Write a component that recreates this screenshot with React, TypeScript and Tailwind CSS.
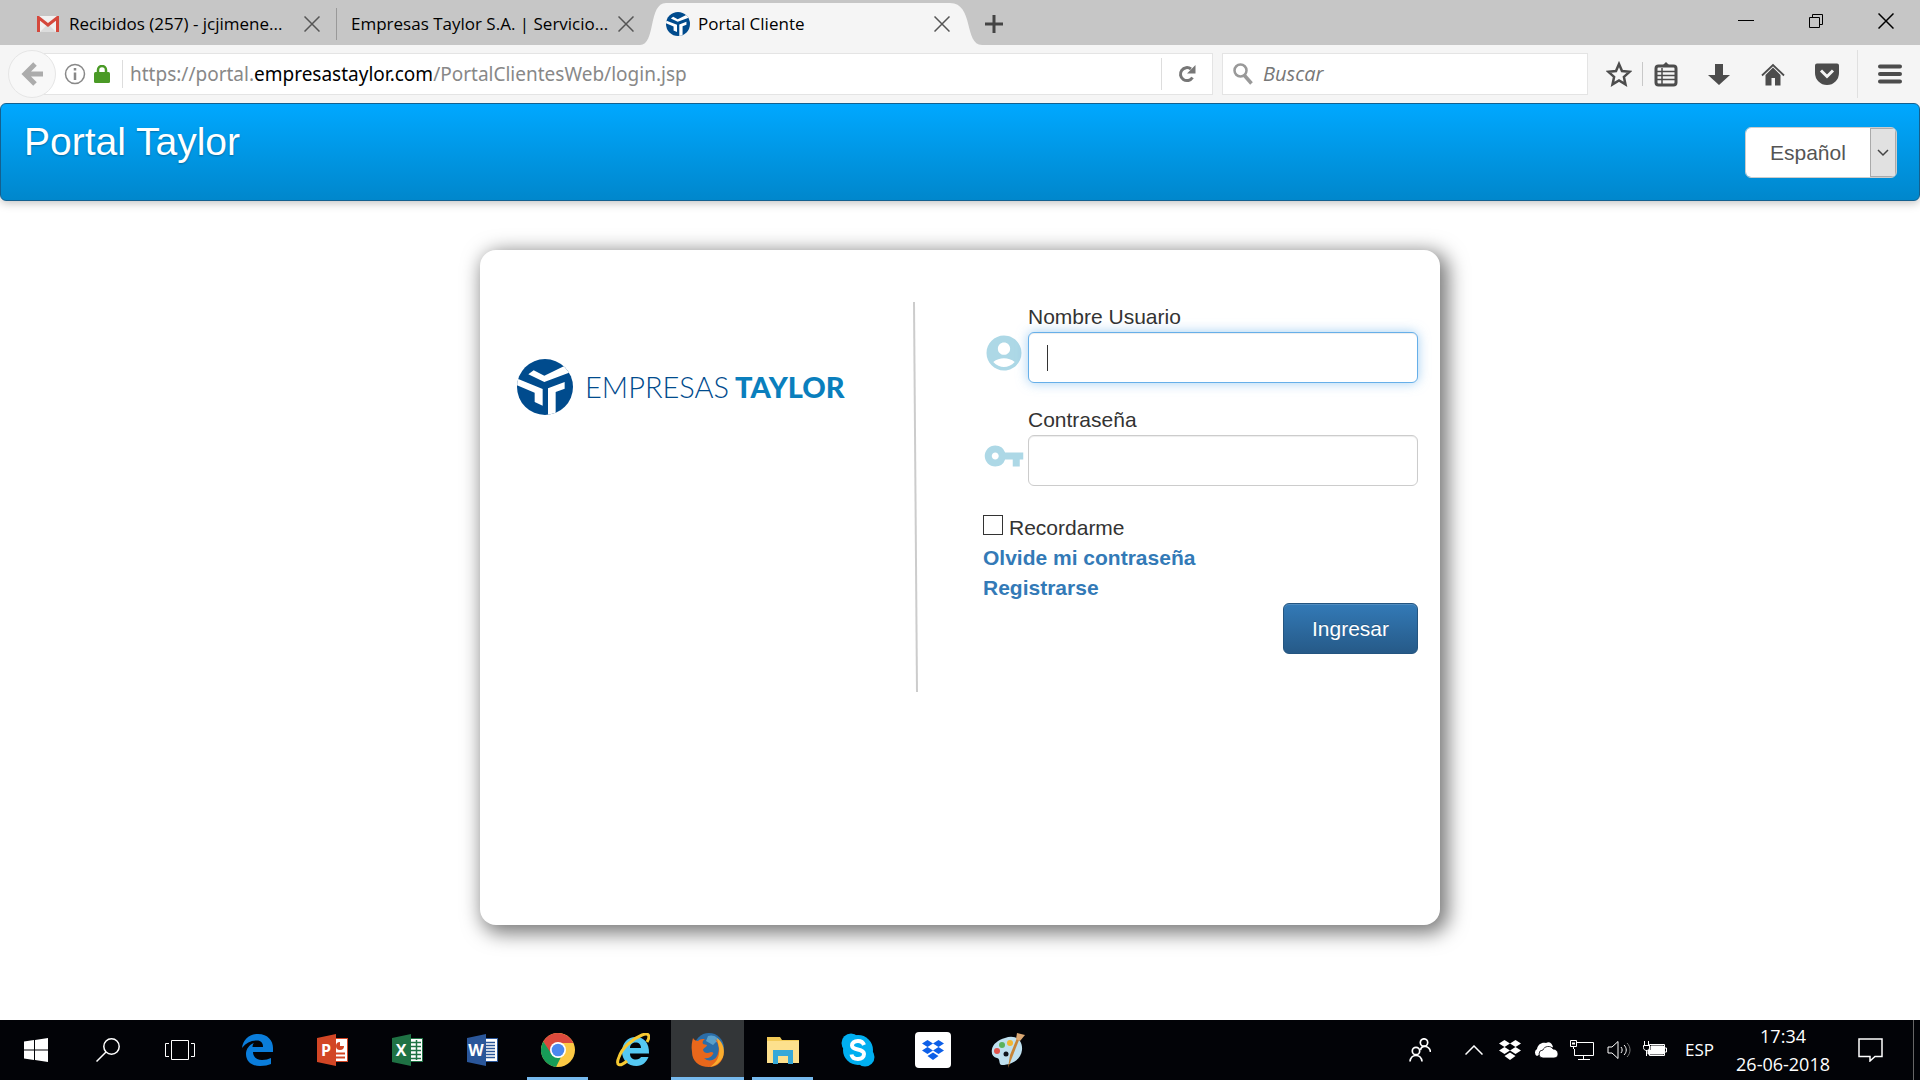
import type { ReactNode } from "react";
import { MdAccountCircle, MdVpnKey } from "react-icons/md";

type IconProps = {
  className?: string;
};

type TaskbarApp = {
  name: string;
  icon: ReactNode;
  state: "closed" | "open" | "active";
};

const TaylorMark = ({ className }: IconProps) => (
  <svg className={className} viewBox="0 0 168 168" aria-hidden="true">
    <defs>
      <clipPath id="taylor-disc">
        <circle cx="84" cy="84" r="84" />
      </clipPath>
    </defs>
    <g clipPath="url(#taylor-disc)">
      <rect width="168" height="168" fill="#004b8d" />
      <path
        fill="#fff"
        d="M148 18 82 50 50 34 34 46l48 23 86-32zM-2 58l79 32v50l-24-11v-28L-2 78zM93 88l50-19v20l-27 10v69H93z"
      />
    </g>
  </svg>
);

const CloseIcon = ({ className }: IconProps) => (
  <svg className={className} viewBox="0 0 16 16" stroke="currentColor" strokeWidth="1.5" aria-hidden="true">
    <path d="m.5.5 15 15M15.5.5l-15 15" />
  </svg>
);

const GmailIcon = () => (
  <svg className="h-4 w-[22px] shrink-0" viewBox="0 0 22 16" aria-hidden="true">
    <rect width="22" height="16" rx="1" fill="#f1f1f1" />
    <path d="m3 16 8-8 8 8z" fill="#dcdcdc" />
    <path d="M1.500 16V1.500L11 9l9.500-7.500V16" fill="none" stroke="#d5483c" strokeWidth="3" />
  </svg>
);

const TabStrip = () => (
  <header className="flex h-[45px] items-end bg-[#c6c6c6] text-[17px] leading-6 text-black">
    <div className="flex h-[42px] w-80 items-center pl-[37px]">
      <GmailIcon />
      <span className="ml-2.5 flex-1 whitespace-nowrap">Recibidos (257) - jcjimene...</span>
      <button type="button" aria-label="Cerrar pestaña Recibidos" className="shrink-0 text-[#555]">
        <CloseIcon className="size-4" />
      </button>
    </div>
    <div className="ml-4 flex h-[42px] w-[298px] items-center">
      <span className="h-8 w-px bg-[#999]" />
      <span className="ml-3.5 flex-1 whitespace-nowrap">Empresas Taylor S.A. | Servicio...</span>
      <button type="button" aria-label="Cerrar pestaña Empresas Taylor" className="shrink-0 text-[#555]">
        <CloseIcon className="size-4" />
      </button>
    </div>
    <div className="ml-1.5 flex h-[42px]">
      <svg className="h-full w-[26px]" viewBox="0 0 26 42" fill="#f5f5f5" aria-hidden="true">
        <path d="M0 42C16 42 8 0 26 0v42z" />
      </svg>
      <div className="flex w-[284px] items-center bg-[#f5f5f5]">
        <TaylorMark className="size-6" />
        <span className="ml-2 flex-1">Portal Cliente</span>
        <button type="button" aria-label="Cerrar pestaña Portal Cliente" className="text-[#555]">
          <CloseIcon className="size-4" />
        </button>
      </div>
      <svg className="h-full w-[32px]" viewBox="0 0 32 42" fill="#f5f5f5" aria-hidden="true">
        <path d="M0 0c24 0 14 42 32 42H0z" />
      </svg>
    </div>
    <button type="button" aria-label="Nueva pestaña" className="ml-0.5 flex h-[42px] items-center text-[#444]">
      <svg className="size-5" viewBox="0 0 20 20" stroke="currentColor" strokeWidth="3" aria-hidden="true">
        <path d="M10 1v18M1 10h18" />
      </svg>
    </button>
    <div className="ml-auto flex h-full items-start pr-6">
      <button type="button" aria-label="Minimizar" className="flex h-[42px] w-[70px] items-center justify-end">
        <svg className="size-5" viewBox="0 0 20 20" stroke="#000" aria-hidden="true">
          <path d="M2 9.500h16" />
        </svg>
      </button>
      <button type="button" aria-label="Restaurar" className="flex h-[42px] w-[70px] items-center justify-end">
        <svg className="size-5" viewBox="0 0 20 20" fill="none" stroke="#000" aria-hidden="true">
          <path d="M3.500 6.500h10v10h-10zM6.500 6.500v-3h10v10h-3" />
        </svg>
      </button>
      <button type="button" aria-label="Cerrar" className="flex h-[42px] w-[70px] items-center justify-end">
        <CloseIcon className="mr-0.5 size-4" />
      </button>
    </div>
  </header>
);

const NavigationBar = () => (
  <nav className="flex h-[58px] items-center bg-[#f5f5f5] px-2 text-xl text-[#4c4c4c]">
    <button
      type="button"
      aria-label="Atrás"
      className="z-10 flex size-12 shrink-0 items-center justify-center rounded-full border border-[#e6e6e6] bg-[#f8f8f8] text-[#acacac]"
    >
      <svg className="h-6 w-[22px]" viewBox="0 0 22 24" fill="none" stroke="currentColor" strokeWidth="5" aria-hidden="true">
        <path d="M22 12H5M14 2 4 12l10 10" />
      </svg>
    </button>
    <div className="-ml-3 flex h-[42px] flex-1 items-center border border-[#e4e4e4] bg-white pl-[19px]">
      <svg className="size-[22px] shrink-0" viewBox="0 0 22 22" fill="none" stroke="#888" aria-hidden="true">
        <circle cx="11" cy="11" r="9.500" strokeWidth="1.500" />
        <path d="M11 9.500V17M11 5v2.500" strokeWidth="2.500" />
      </svg>
      <svg className="ml-2 h-[18px] w-4 shrink-0" viewBox="0 0 16 18" aria-hidden="true">
        <path d="M4 9V5a4 4 0 0 1 8 0v4" fill="none" stroke="#4a9a26" strokeWidth="2.500" />
        <rect y="7" width="16" height="11" rx="1.500" fill="#4a9a26" />
      </svg>
      <span className="ml-3 h-7 w-px bg-[#ddd]" />
      <span className="ml-[7px] flex-1 font-['Noto_Sans'] text-[19px] whitespace-nowrap text-[#888]">
        https://portal.<span className="text-black">empresastaylor.com</span>/PortalClientesWeb/login.jsp
      </span>
      <button
        type="button"
        aria-label="Recargar"
        className="flex h-8 w-[51px] items-center justify-center border-l border-[#ddd] text-[#777]"
      >
        <svg className="size-[18px]" viewBox="0 0 18 18" aria-hidden="true">
          <path d="M14.500 12.500A6.500 6.500 0 1 1 13 4" fill="none" stroke="currentColor" strokeWidth="3" />
          <path d="M17.500 0v8.500H9z" fill="currentColor" />
        </svg>
      </button>
    </div>
    <label className="ml-[9px] flex h-[42px] w-[366px] items-center border border-[#e4e4e4] bg-white pl-2.5">
      <svg className="h-6 w-5" viewBox="0 0 20 24" fill="none" stroke="#999" aria-hidden="true">
        <circle cx="7.500" cy="8.500" r="6" strokeWidth="2.500" />
        <path d="m11.500 13.500 7 8" strokeWidth="3.500" />
      </svg>
      <input
        type="search"
        aria-label="Buscar en la web"
        placeholder="Buscar"
        className="ml-2.5 min-w-0 flex-1 bg-transparent italic outline-none placeholder:text-[#777]"
      />
    </label>
    <div className="flex h-full items-center pl-[18px]">
      <button type="button" aria-label="Añadir a marcadores">
        <svg className="size-[26px]" viewBox="0 0 26 26" fill="none" stroke="currentColor" strokeWidth="2.500" aria-hidden="true">
          <path d="m13 3 3 7 7.500.8-5.600 5.100 1.600 7.500-6.500-3.900-6.500 3.900 1.600-7.500-5.600-5.100L10 10z" />
        </svg>
      </button>
      <span className="ml-2.5 h-6 w-px bg-[#c8c8c8]" />
      <button type="button" aria-label="Mostrar marcadores" className="ml-2.5">
        <svg className="h-[26px] w-[26px]" viewBox="0 0 26 26" aria-hidden="true">
          <path d="m13 1 4 4H9z" fill="currentColor" />
          <rect x="3" y="5" width="20" height="19" rx="2.500" fill="none" stroke="currentColor" strokeWidth="3" />
          <path d="M4 10.500h18M4 14.500h18M4 18.500h18M9 7v16" fill="none" stroke="currentColor" strokeWidth="1.500" />
        </svg>
      </button>
      <button type="button" aria-label="Descargas" className="ml-[27px]">
        <svg className="size-[26px]" viewBox="0 0 26 26" fill="currentColor" aria-hidden="true">
          <path d="M9 3h8v11h7L13 24 2 14h7z" />
        </svg>
      </button>
      <button type="button" aria-label="Inicio" className="ml-7">
        <svg className="size-[26px]" viewBox="0 0 26 26" aria-hidden="true">
          <path d="m2 14.500 11-10.500 11 10.500" fill="none" stroke="currentColor" strokeWidth="1.800" />
          <path d="M13 6.500 20.500 14v10.500H15V17h-3.500v7.500h-6V14z" fill="currentColor" />
        </svg>
      </button>
      <button type="button" aria-label="Guardar en Pocket" className="ml-7">
        <svg className="size-[26px]" viewBox="0 0 26 26" aria-hidden="true">
          <path d="M3 2.500h20a2 2 0 0 1 2 2V12a12 12 0 0 1-24 0V4.500a2 2 0 0 1 2-2z" fill="currentColor" />
          <path d="m7 9.500 6 6 6-6" fill="none" stroke="#f5f5f5" strokeWidth="3" />
        </svg>
      </button>
      <span className="ml-[17px] h-12 w-px bg-[#e0e0e0]" />
      <button type="button" aria-label="Abrir menú" className="ml-5 mr-2.5">
        <svg className="h-5 w-6" viewBox="0 0 24 20" stroke="currentColor" strokeWidth="4" strokeLinecap="round" aria-hidden="true">
          <path d="M2 2.500h20M2 10h20M2 17.500h20" />
        </svg>
      </button>
    </div>
  </nav>
);

const PortalHeader = () => (
  <header className="flex h-[98px] items-start justify-between rounded-md border border-[#14608f] bg-linear-to-b from-[#00a8ff] to-[#0087cc] pt-[23px] pr-[22px] pl-[23px] shadow-[0_2px_10px_rgba(0,0,0,0.25)]">
    <h1 className="text-[39px] leading-[30px] text-white [text-shadow:0_1px_2px_rgba(0,0,0,0.3)]">
      Portal Taylor
    </h1>
    <div className="relative h-[51px] w-[152px] overflow-hidden rounded-md border border-[#ccc] bg-white">
      <select
        aria-label="Idioma"
        className="h-full w-full appearance-none bg-white pl-6 text-[21px] leading-[30px] text-[#555] outline-none"
      >
        <option>Español</option>
      </select>
      <span className="pointer-events-none absolute inset-y-0 right-0 flex w-[26px] items-center justify-center border border-[#aaa] bg-[#e1e1e1]">
        <svg className="h-2 w-3" viewBox="0 0 12 8" fill="none" stroke="#444" strokeWidth="1.500" aria-hidden="true">
          <path d="m1 1 5 5 5-5" />
        </svg>
      </span>
    </div>
  </header>
);

const LoginCard = () => (
  <section className="mx-auto mt-[49px] flex min-h-[675px] w-1/2 min-w-[880px] items-start rounded-2xl bg-white pt-[52px] pr-[22px] shadow-[5px_5px_20px_3px_#777]">
    <div className="mt-[57px] ml-[37px] flex flex-1 items-center whitespace-nowrap">
      <TaylorMark className="size-14" />
      <p className="ml-3 font-['Lato'] text-[29px] leading-10 text-[#004b8d]">
        <span className="font-light">EMPRESAS</span>
        <span className="ml-1.5 font-black text-[#0a7fbd]">TAYLOR</span>
      </p>
    </div>
    <svg className="mr-16 h-[390px] w-1.5" viewBox="0 0 6 390" stroke="#ccc" strokeWidth="2" aria-hidden="true">
      <path d="M1 0l3 390" />
    </svg>
    <form className="w-[435px] leading-[30px]" onSubmit={(event) => event.preventDefault()}>
      <div className="flex items-end gap-[3px]">
        <MdAccountCircle className="mb-[9px] size-[42px] text-[#add8e6]" />
        <div className="relative flex-1">
          <label htmlFor="username" className="block">
            Nombre Usuario
          </label>
          <input
            id="username"
            type="text"
            className="block h-[51px] w-full rounded-md border border-[#66afe9] bg-white px-[18px] shadow-[inset_0_1px_1px_rgba(0,0,0,0.075),0_0_12px_rgba(102,175,233,0.6)] outline-none"
          />
          <span className="pointer-events-none absolute bottom-3 left-[19px] h-[26px] w-px bg-[#333]" />
        </div>
      </div>
      <div className="mt-[22px] flex items-end gap-[3px]">
        <MdVpnKey className="mb-[9px] size-[42px] text-[#add8e6]" />
        <div className="flex-1">
          <label htmlFor="password" className="block">
            Contraseña
          </label>
          <input
            id="password"
            type="password"
            className="block h-[51px] w-full rounded-md border border-[#ccc] bg-white px-[18px] shadow-[inset_0_1px_1px_rgba(0,0,0,0.075)] outline-none"
          />
        </div>
      </div>
      <label className="mt-[27px] flex items-start gap-1.5">
        <input type="checkbox" className="mt-0.5 size-5 appearance-none border border-[#333] bg-white" />
        Recordarme
      </label>
      <a href="#recuperar" className="block font-bold text-[#337ab7]">
        Olvide mi contraseña
      </a>
      <a href="#registro" className="block font-bold text-[#337ab7]">
        Registrarse
      </a>
      <button
        type="submit"
        className="ml-auto block h-[51px] w-[135px] rounded-md border border-[#245580] bg-linear-to-b from-[#337ab7] to-[#265a88] text-white shadow-[inset_0_1px_0_rgba(255,255,255,0.15)] [text-shadow:0_-1px_0_rgba(0,0,0,0.2)]"
      >
        Ingresar
      </button>
    </form>
  </section>
);

const OfficeIcon = ({ letter, color, children }: { letter: string; color: string; children: ReactNode }) => (
  <svg className="size-8" viewBox="0 0 32 32" aria-hidden="true">
    <rect x="16" y="4" width="15" height="24" fill={color} />
    <rect x="17" y="5" width="13" height="22" fill="#fff" />
    {children}
    <path d="M0 4 19 0v32L0 28z" fill={color} />
    <text x="9" y="22" fill="#fff" fontSize="16" fontWeight="700" textAnchor="middle">
      {letter}
    </text>
  </svg>
);

const DropboxShape = ({ className }: IconProps) => (
  <svg className={className} viewBox="0 0 22 20" fill="currentColor" aria-hidden="true">
    <path d="m5.500 0 5.500 3.500L5.500 7 0 3.500zM16.500 0 22 3.500 16.500 7 11 3.500zM5.500 7l5.500 3.500L5.500 14 0 10.500zM16.500 7l5.500 3.500-5.500 3.500-5.500-3.500zM11 12.500l5.500 3.500-5.500 4-5.500-4z" />
  </svg>
);

const EdgeIcon = () => (
  <svg className="h-8 w-[31px]" viewBox="0 0 31 32" fill="#0a7ddb" aria-hidden="true">
    <path d="M0 14C1 6 7 0 16 0c10 0 15 7 15 14v4H11c0 5 4 8 9 8 4 0 6-1 9-2v6c-3 1-6 2-11 2C9 32 4 27 4 20c0-5 3-9 8-11-1 1-1.500 2.500-1.500 4H21c0-4-2-6.500-6-6.500C9 6.500 4 9 0 14z" />
  </svg>
);

const ChromeIcon = () => (
  <svg className="size-[34px]" viewBox="0 0 34 34" aria-hidden="true">
    <circle cx="17" cy="17" r="17" fill="#fcc944" />
    <path d="M17 0a17 17 0 0 1 15.400 10H17L9.500 21.500 2.300 8.500A17 17 0 0 1 17 0z" fill="#dc4a3d" />
    <path d="M2.300 8.500 10.500 21l6.500 4 3-1-5 10A17 17 0 0 1 2.300 8.500z" fill="#179c58" />
    <circle cx="17" cy="17" r="8" fill="#fff" />
    <circle cx="17" cy="17" r="6.300" fill="#4b88ee" />
  </svg>
);

const ExplorerIcon = () => (
  <svg className="size-[34px]" viewBox="0 0 34 34" fill="none" aria-hidden="true">
    <path d="M32.500 24c-2 5-6 9-12 9C12 33 6 27 6 18.500S12 4 19.500 4C28 4 33.500 10 33 20.500H14c0 4 2.500 6 6 6 2.500 0 4-1 5-2.500zM14 15h11c0-3.500-2-5.500-5.500-5.500S14 12 14 15z" fill="#55c8f2" />
    <path d="M11 28c-7 6-12 5-8-4C6 15 16 6 26 2c8-3 8 2 5 7" stroke="#f6c932" strokeWidth="3" />
  </svg>
);

const FirefoxIcon = () => (
  <svg className="size-[34px]" viewBox="0 0 34 34" aria-hidden="true">
    <circle cx="18" cy="15" r="15" fill="#2b6da8" />
    <path d="M17 3c6-2 11 2 12 7l-4-1-3 3-7-4z" fill="#6fb6da" opacity=".7" />
    <path d="M2 5c1 2 3 3 5 3 2-2 4-2 7-2-2 1-3 3-2 5l4 1c0 2-4 3-4 5 1 3 4 4 8 2 2 0 3 1 2 2-2 4-6 5-9 4 5 5 13 2 14-5 2-5 0-10-3-14 7 4 10 12 8 18-2 7-8 10-14 10C8 34 1 28 1 19 0 13 1 9 2 5z" fill="#e8671b" />
    <path d="M26 5c7 5 8 13 6 19-3 6-8 9-13 10 7-5 10-11 9-19z" fill="#f9ad2e" />
  </svg>
);

const FolderIcon = () => (
  <svg className="h-7 w-8" viewBox="0 0 32 28" aria-hidden="true">
    <path d="M0 1h13l2 3h17v23H0z" fill="#f2ca57" />
    <path d="M0 5h32v22H0z" fill="#fde08d" />
    <path d="M6 28V14h20v14h-5v-8H11v8z" fill="#36a8d8" />
  </svg>
);

const SkypeIcon = () => (
  <svg className="size-[34px]" viewBox="0 0 34 34" aria-hidden="true">
    <circle cx="17" cy="17" r="15" fill="#00aff0" />
    <circle cx="10" cy="10" r="9.500" fill="#00aff0" />
    <circle cx="24" cy="24" r="9.500" fill="#00aff0" />
    <path d="M23 12c-1-3-3-4-6-4-4 0-6 2-6 4.500C11 18 23 15 23 21c0 3-2.500 5-6 5s-6-1.500-6.500-4.500" fill="none" stroke="#fff" strokeWidth="4" />
  </svg>
);

const PaintIcon = () => (
  <svg className="h-9 w-[34px]" viewBox="0 0 34 36" aria-hidden="true">
    <path d="M14 6c10-4 18 2 17 12S20 33 11 33c-4 0-1-6-5-7S0 22 1 17 7 8 14 6z" fill="#bfe0ef" />
    <circle cx="15" cy="22" r="2.500" fill="#10151c" />
    <circle cx="6" cy="19" r="3" fill="#e0524a" />
    <circle cx="11" cy="13" r="3" fill="#5bb25b" />
    <circle cx="19" cy="11" r="3" fill="#f2b631" />
    <path d="M28 8 17 36l2-13 7-17z" fill="#c78437" />
    <path d="m25 7 1-6 8 2-5 6z" fill="#dba873" />
  </svg>
);

const apps: TaskbarApp[] = [
  { name: "Microsoft Edge", icon: <EdgeIcon />, state: "closed" },
  {
    name: "PowerPoint",
    icon: (
      <OfficeIcon letter="P" color="#d24625">
        <circle cx="23" cy="12" r="4" fill="#d24625" />
        <path d="M23 12V7h6v5z" fill="#fff" />
        <path d="M19 19.500h9M19 23.500h9" stroke="#d24625" strokeWidth="2" />
      </OfficeIcon>
    ),
    state: "closed"
  },
  {
    name: "Excel",
    icon: (
      <OfficeIcon letter="X" color="#1f7244">
        <path d="M19 8.500h10M19 12.500h10M19 16.500h10M19 20.500h10M19 24.500h10M24.500 6v20" stroke="#1f7244" strokeWidth="1.500" />
      </OfficeIcon>
    ),
    state: "closed"
  },
  {
    name: "Word",
    icon: (
      <OfficeIcon letter="W" color="#2a5699">
        <path d="M19 8.500h9M19 11.500h9M19 14.500h9M19 17.500h9M19 20.500h9M19 23.500h9" stroke="#2a5699" strokeWidth="1.500" />
      </OfficeIcon>
    ),
    state: "closed"
  },
  { name: "Google Chrome", icon: <ChromeIcon />, state: "open" },
  { name: "Internet Explorer", icon: <ExplorerIcon />, state: "closed" },
  { name: "Firefox", icon: <FirefoxIcon />, state: "active" },
  { name: "Explorador de archivos", icon: <FolderIcon />, state: "open" },
  { name: "Skype", icon: <SkypeIcon />, state: "closed" },
  {
    name: "Dropbox",
    icon: (
      <span className="flex size-9 items-center justify-center rounded-sm bg-white text-[#0d5fe8]">
        <DropboxShape className="h-5 w-[22px]" />
      </span>
    ),
    state: "closed"
  },
  { name: "Paint", icon: <PaintIcon />, state: "closed" }
];

const AppButton = ({ app }: { app: TaskbarApp }) => (
  <button
    type="button"
    aria-label={app.name}
    className={`relative flex h-full w-[73px] items-center justify-center ${app.state === "active" ? "bg-[#333638]" : ""}`}
  >
    {app.icon}
    {app.state === "closed" ? null : (
      <span
        className={`absolute bottom-0 h-[3px] bg-[#76b9ed] ${app.state === "active" ? "inset-x-0" : "inset-x-1.5"}`}
      />
    )}
  </button>
);

const Taskbar = () => (
  <footer className="flex h-[60px] items-center bg-[#020307] text-[17px] text-white">
    <button type="button" aria-label="Inicio de Windows" className="flex w-[72px] justify-center">
      <svg className="size-6" viewBox="0 0 24 24" fill="#fff" aria-hidden="true">
        <path d="M0 3.500 10 2v9.500H0zM11 1.900 24 0v11.500H11zM0 12.500h10V22L0 20.500zM11 12.500h13V24l-13-1.900z" />
      </svg>
    </button>
    <button type="button" aria-label="Buscar en Windows" className="flex w-[72px] justify-center">
      <svg className="size-6" viewBox="0 0 24 24" fill="none" stroke="#fff" strokeWidth="1.500" aria-hidden="true">
        <circle cx="15.500" cy="8.500" r="7.700" />
        <path d="M10 14 .5 23.500" />
      </svg>
    </button>
    <button type="button" aria-label="Vista de tareas" className="flex w-[72px] justify-center">
      <svg className="h-5 w-[30px]" viewBox="0 0 30 20" fill="none" stroke="#fff" aria-hidden="true">
        <path d="M6.500.5h17v19h-17zM4 3.500H.5v13H4M26 3.500h3.500v13H26" />
      </svg>
    </button>
    <div className="ml-[5px] flex h-full gap-0.5">
      {apps.map((app) => (
        <AppButton app={app} key={app.name} />
      ))}
    </div>
    <div className="ml-auto flex h-full items-center">
      <svg className="mr-[34px] h-6 w-[22px]" viewBox="0 0 22 24" fill="none" stroke="#fff" strokeWidth="1.700" aria-hidden="true">
        <circle cx="15" cy="4.500" r="3.700" />
        <path d="M11.500 12c1-5 9-5 10 2" />
        <circle cx="7" cy="13" r="3.700" />
        <path d="M1 23.500c1-8 11-8 12 0" />
      </svg>
      <svg className="mr-4 h-2.5 w-[18px]" viewBox="0 0 18 10" fill="none" stroke="#fff" strokeWidth="1.500" aria-hidden="true">
        <path d="m.5 9.500 8.500-8.500 8.500 8.500" />
      </svg>
      <DropboxShape className="mr-[13px] h-5 w-[22px]" />
      <svg className="mr-3 h-4 w-6" viewBox="0 0 24 16" aria-hidden="true">
        <path d="M3 14a4 4 0 0 1 0-7C4 2 8 0 12 1c3-2 6 0 7 4" fill="#fff" />
        <path d="M9 16a4 4 0 0 1 0-8c1-4 8-5 10-1 6 0 7 9 1 9z" fill="#fff" stroke="#020307" strokeWidth=".8" />
      </svg>
      <svg className="mr-[13px] h-5 w-6" viewBox="0 0 24 20" fill="none" stroke="#fff" aria-hidden="true">
        <path d="M7 2.500h16.500v13H4.500V9M8 19.500h12M13.500 15.500v4M.5.500h6v6h-6zM3.500 6.500V9" />
        <path d="M2 3.500h3" strokeWidth="2" />
      </svg>
      <svg className="mr-3 h-5 w-6" viewBox="0 0 24 20" fill="none" stroke="#fff" aria-hidden="true">
        <path d="M1 7h4l6-5.500v17L5 13H1zM14 7c1.500 2 1.500 4 0 6M17 5c3 3 3 7 0 10" />
        <path d="M20 3c4 4 4 10 0 14" stroke="#777" />
      </svg>
      <svg className="mr-[18px] h-5 w-6" viewBox="0 0 24 20" fill="none" stroke="#fff" aria-hidden="true">
        <path d="M6.500 4.500h15v11h-15zM21.500 8H23.500v4h-2" />
        <path d="M8 6h12.500v8H5v-3.500h3z" fill="#fff" />
        <path d="M1.500 1v4M5.500 1v4M.5 5.500h6v2c0 4-6 4-6 0zM3.500 10v6" />
      </svg>
      <span className="mr-[22px]">ESP</span>
      <time className="text-center text-lg leading-7" dateTime="2018-06-26T17:34">
        17:34
        <br />
        26-06-2018
      </time>
      <svg className="mx-7 h-6 w-[25px]" viewBox="0 0 25 24" fill="none" stroke="#fff" strokeWidth="1.500" aria-hidden="true">
        <path d="M1 1h23v17.500h-7L12 23v-4.500H1z" />
      </svg>
      <span className="ml-0.5 h-full w-px bg-[#666]" />
      <span className="w-1.5" />
    </div>
  </footer>
);

export default function App() {
  return (
    <div className="flex min-h-screen min-w-[1280px] flex-col bg-white font-['Open_Sans','Noto_Sans',sans-serif]">
      <TabStrip />
      <NavigationBar />
      <main className="flex-1 overflow-hidden pb-12 font-['Liberation_Sans',Arial,sans-serif] text-[21px] text-[#333]">
        <PortalHeader />
        <LoginCard />
      </main>
      <Taskbar />
    </div>
  );
}
